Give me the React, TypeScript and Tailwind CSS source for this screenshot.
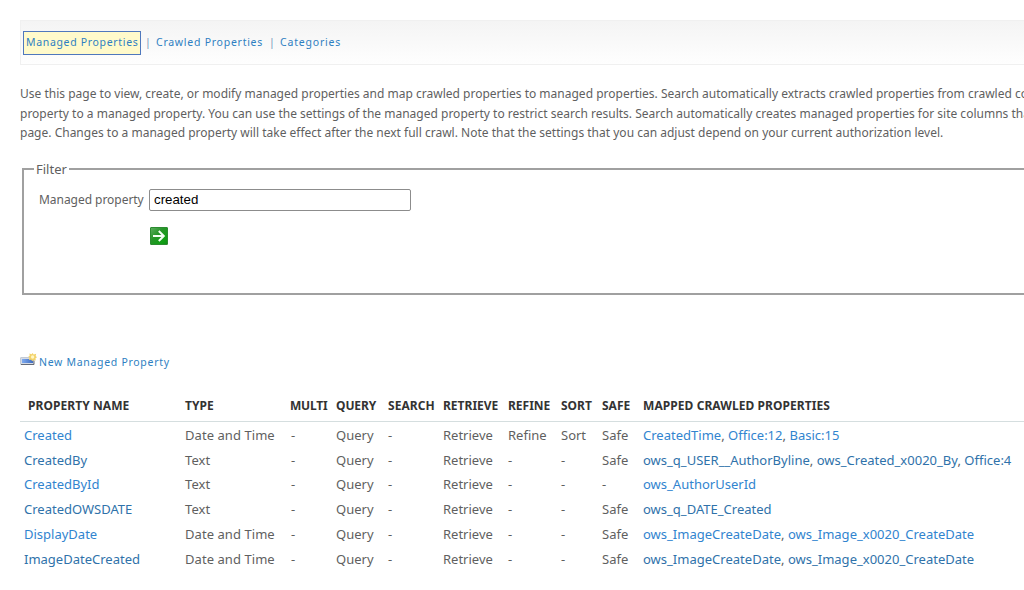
import clsx from "clsx";

interface Property {
  name: string;
  type: string;
  query: string;
  retrieve: string;
  refine: string;
  sort: string;
  safe: string;
  mapped: string[];
}

const base = { query: "Query", retrieve: "Retrieve", refine: "-", sort: "-", safe: "Safe" };

const properties: Property[] = [
  {
    ...base,
    name: "Created",
    type: "Date and Time",
    refine: "Refine",
    sort: "Sort",
    mapped: ["CreatedTime", "Office:12", "Basic:15"],
  },
  {
    ...base,
    name: "CreatedBy",
    type: "Text",
    mapped: ["ows_q_USER__AuthorByline", "ows_Created_x0020_By", "Office:4"],
  },
  { ...base, name: "CreatedById", type: "Text", safe: "-", mapped: ["ows_AuthorUserId"] },
  { ...base, name: "CreatedOWSDATE", type: "Text", mapped: ["ows_q_DATE_Created"] },
  {
    ...base,
    name: "DisplayDate",
    type: "Date and Time",
    mapped: ["ows_ImageCreateDate", "ows_Image_x0020_CreateDate"],
  },
  {
    ...base,
    name: "ImageDateCreated",
    type: "Date and Time",
    mapped: ["ows_ImageCreateDate", "ows_Image_x0020_CreateDate"],
  },
];

const columns = [
  { label: "Property Name", className: "w-[161px] pl-2 tracking-[0.06px]" },
  { label: "Type", className: "w-[106px] pl-1" },
  { label: "Multi", className: "w-[45px] pl-[3px] tracking-[-0.2px]" },
  { label: "Query", className: "w-[52px] pl-1 tracking-[-0.1px]" },
  { label: "Search", className: "w-[55px] pl-1 tracking-[0.05px]" },
  { label: "Retrieve", className: "w-[65px] pl-1" },
  { label: "Refine", className: "w-[53px] pl-1" },
  { label: "Sort", className: "w-[41px] pl-1" },
  { label: "Safe", className: "w-[41px] pl-1" },
  { label: "Mapped Crawled Properties", className: "w-[400px] pl-1 tracking-[0.07px]" },
];

function GoIcon() {
  return (
    <svg width="18" height="18" viewBox="0 0 18 18">
      <defs>
        <linearGradient id="go" x1="0" y1="0" x2="1" y2="1">
          <stop offset="0" stopColor="#5eae60" />
          <stop offset="0.4" stopColor="#279529" />
          <stop offset="0.8" stopColor="#10a014" />
          <stop offset="1" stopColor="#16851a" />
        </linearGradient>
      </defs>
      <rect x="0.5" y="0.5" width="17" height="17" rx="0.5" fill="url(#go)" stroke="#2c8c30" />
      <path d="M3 9h11M8.8 4l5 5-5 5" fill="none" stroke="#f4fff4" strokeWidth="2" />
    </svg>
  );
}

function NewPropertyIcon() {
  return (
    <svg width="17" height="14" viewBox="0 0 17 14">
      <defs>
        <linearGradient id="bar" x1="0" y1="0" x2="1" y2="0">
          <stop offset="0" stopColor="#7fabf0" />
          <stop offset="1" stopColor="#3f6cc0" />
        </linearGradient>
      </defs>
      <rect x="0.5" y="4.5" width="13" height="7" rx="0.5" fill="#d5dbe4" stroke="#c3cad5" />
      <rect x="2" y="6" width="11" height="4" fill="url(#bar)" />
      <path d="M1 11.5h13v-4" fill="none" stroke="#656b78" />
      <path
        d="M12.5 0l1.2 1.5 2.5-.8-.5 2.3 1.3 1.3-1.5 1 .3 2.3-2.3-.7-1.3 1.3-1-1.5-2.3.3.7-2.3L8.2 3.7l1.5-1-.3-2.1 2.2.6z"
        fill="#f3d36b"
      />
      <circle cx="12.6" cy="4" r="1.7" fill="#fff6c5" />
    </svg>
  );
}

export default function App() {
  return (
    <div className="h-[590px] w-[1024px] overflow-hidden bg-white pl-5 pt-5 font-['Noto_Sans',sans-serif] text-[#5f5f5f]">
      <nav className="flex h-[45px] items-center border border-r-0 border-[#f0f0f0] bg-linear-to-b from-[#f4f4f4] to-[#fefefe] pl-[2px] text-[10.5px] tracking-[0.74px] whitespace-nowrap text-[#2e7fc2]">
        <a className="mr-px flex h-6 w-[118px] items-center border border-[#4f78bd] bg-[#fffacb] pl-[2px] tracking-[0.67px]">
          Managed Properties
        </a>
        <span className="w-[14px] pl-[3px] text-[#7897b8]">|</span>
        <a className="w-[113px]">Crawled Properties</a>
        <span className="w-[11px] text-[#7897b8]">|</span>
        <a className="tracking-[0.81px]">Categories</a>
      </nav>

      <div className="mt-[19px] text-[12px] leading-[19.5px] tracking-[0.005px] whitespace-nowrap">
        <p>
          Use this page to view, create, or modify managed properties and map crawled properties to
          managed properties. Search automatically extracts crawled properties from crawled content
        </p>
        <p>
          property to a managed property. You can use the settings of the managed property to
          restrict search results. Search automatically creates managed properties for site columns that
        </p>
        <p>
          page. Changes to a managed property will take effect after the next full crawl. Note that
          the settings that you can adjust depend on your current authorization level.
        </p>
      </div>

      <fieldset className="mt-[18px] ml-[2px] h-[134px] w-[1030px] border-2 border-[#a0a0a0] pl-[15px]">
        <legend className="-ml-[5px] px-[2px] text-[13px] leading-[17px]">Filter</legend>
        <div className="mt-[11px] flex items-center">
          <label htmlFor="filter" className="w-[110px] text-[12px] tracking-[-0.04px] whitespace-nowrap">
            Managed property
          </label>
          <input
            id="filter"
            defaultValue="created"
            className="h-[22px] w-[262px] rounded-[2px] border border-[#8c8c8c] px-1 font-['Liberation_Sans',sans-serif] text-[13.3px] text-black"
          />
        </div>
        <button className="mt-[16px] ml-[111px] block">
          <GoIcon />
        </button>
      </fieldset>

      <a className="mt-[58px] flex h-[18px] text-[10.5px] tracking-[0.7px] text-[#2e7fc2]">
        <NewPropertyIcon />
        <span className="ml-[2px] leading-[18px]">New Managed Property</span>
      </a>

      <table className="mt-[22px] w-[1019px] table-fixed border-collapse text-left whitespace-nowrap">
        <thead>
          <tr className="h-[29px] border-b border-[#d5dedf] text-[12px] text-[#333]">
            {columns.map((column) => (
              <th key={column.label} className={clsx("pb-[2px] font-bold uppercase", column.className)}>
                {column.label}
              </th>
            ))}
          </tr>
        </thead>
        <tbody className="text-[13px]">
          <tr className="h-px" />
          {properties.map((property, i) => {
            const link = i % 2 ? "text-[#2f72aa]" : "text-[#3184cf]";
            return (
              <tr key={property.name} className="h-[24.8px] leading-[20px] *:pl-1">
                <td className={link}>{property.name}</td>
                <td className="tracking-[0.06px]">{property.type}</td>
                <td>-</td>
                <td>{property.query}</td>
                <td>-</td>
                <td>{property.retrieve}</td>
                <td>{property.refine}</td>
                <td>{property.sort}</td>
                <td>{property.safe}</td>
                <td className="tracking-[0.01px]">
                  {property.mapped.map((item, j) => (
                    <span key={item}>
                      {j > 0 && ", "}
                      <a className={link}>{item}</a>
                    </span>
                  ))}
                </td>
              </tr>
            );
          })}
        </tbody>
      </table>
    </div>
  );
}
